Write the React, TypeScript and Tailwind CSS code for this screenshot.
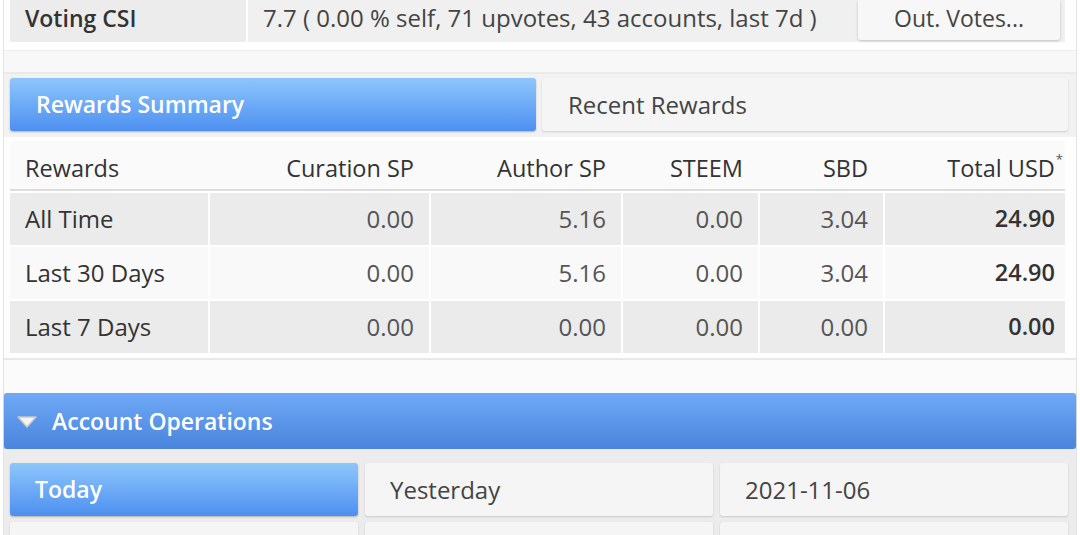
import React from "react";

const rows = [
  { label: "All Time", v: ["0.00", "5.16", "0.00", "3.04"], total: "24.90", dark: true },
  { label: "Last 30 Days", v: ["0.00", "5.16", "0.00", "3.04"], total: "24.90", dark: false },
  { label: "Last 7 Days", v: ["0.00", "0.00", "0.00", "0.00"], total: "0.00", dark: true },
];

const colW = ["w-[198px]", "w-[221px]", "w-[192px]", "w-[137px]", "w-[125px]", "flex-1"];

export default function App() {
  return (
    <div
      className="w-[1080px] h-[535px] overflow-hidden bg-white text-[#333]"
      style={{ fontFamily: '"Open Sans", "Noto Sans", sans-serif' }}
    >
      <div className="mx-[3px] border-x border-[#e4e4e4] bg-[#f7f7f7] h-full">
        {/* Voting CSI panel */}
        <div className="bg-white pl-[6px] pr-[11px] pb-[8px] border-b border-[#eeeeee]">
          <div className="flex h-[42px] items-stretch">
            <div className="w-[236px] bg-[#ececec] flex items-center pl-[15px] pb-[6px] text-[23px] font-semibold text-[#333]">
              Voting CSI
            </div>
            <div className="flex-1 ml-[2px] bg-[#f0f0f0] flex items-center justify-between pl-[15px] pr-[5px] text-[24px] text-[#444]">
              <span className="-mt-[6px]">7.7 ( 0.00 % self, 71 upvotes, 43 accounts, last 7d )</span>
              <div className="w-[202px] h-[40px] self-start bg-[#f7f7f7] rounded-b-[3px] shadow-[0_1px_3px_rgba(0,0,0,0.2)] flex items-center justify-center pb-[4px] text-[23px] text-[#444]">
                Out. Votes...
              </div>
            </div>
          </div>
        </div>
        <div className="h-[23px] bg-[#f8f8f8] border-b-2 border-[#eaeaea]" />

        {/* Rewards tabs */}
        <div className="bg-[#f2f2f2] pl-[6px] pr-[8px] pt-[4px] pb-[6px] flex gap-[6px]">
          <div className="flex-1 h-[53px] rounded-[3px] bg-gradient-to-b from-[#8ec6fb] to-[#4d8ff0] shadow-[0_1px_2px_rgba(0,0,0,0.25)] flex items-center pl-[26px] text-[23px] font-semibold text-white">
            Rewards Summary
          </div>
          <div className="flex-1 h-[53px] rounded-[3px] bg-[#f5f5f5] shadow-[0_1px_2px_rgba(0,0,0,0.15)] flex items-center pl-[26px] text-[24px] text-[#444]">
            Recent Rewards
          </div>
        </div>

        {/* Rewards table */}
        <div className="bg-white pl-[6px] pr-[11px] pt-[4px] pb-[5px] border-b-2 border-[#e8e8e8]">
          <div className="flex h-[50px] pt-[7px] bg-[#fafafa] border-b-2 border-[#dddddd] text-[23.5px] text-[#333]">
            {["Rewards", "Curation SP", "Author SP", "STEEM", "SBD", "Total USD"].map((h, i) => (
              <div
                key={h}
                className={`${colW[i]} flex items-center ${i === 0 ? "pl-[15px]" : i === 5 ? "justify-end pr-[2px]" : "justify-end pr-[15px]"}`}
              >
                {h}
                {i === 5 && <span className="relative -top-[9px] text-[13px] text-[#555] ml-[1px]">*</span>}
              </div>
            ))}
          </div>
          {rows.map((r) => (
            <div
              key={r.label}
              className={`flex h-[54px] ${r.dark ? "bg-[#ebebeb]" : "bg-[#f9f9f9]"} border-t-2 border-white`}
            >
              <div className={`${colW[0]} flex items-center pl-[15px] text-[24px] text-[#333]`}>
                {r.label}
              </div>
              {r.v.map((v, i) => (
                <div
                  key={i}
                  className={`${colW[i + 1]} border-l-2 border-white flex items-center justify-end pr-[15px] text-[24px] text-[#555]`}
                >
                  {v}
                </div>
              ))}
              <div className={`${colW[5]} border-l-2 border-white flex items-center justify-end pr-[10px] text-[23.5px] font-semibold text-[#333]`}>
                {r.total}
              </div>
            </div>
          ))}
        </div>

        <div className="h-[33px] bg-[#fbfbfb]" />

        {/* Account Operations */}
        <div className="h-[56px] rounded-[3px] bg-gradient-to-b from-[#6fa9f6] to-[#4a84dc] flex items-center pl-[12px] text-[23px] font-semibold text-white shadow-[0_1px_2px_rgba(0,0,0,0.25)]">
          <svg width="22" height="14" viewBox="0 0 22 14" className="mr-[14px] mt-[2px]">
            <path d="M2 2 L20 2 L11 12 Z" fill="#f4f4f4" stroke="#c8c8c8" strokeWidth="1.5" strokeLinejoin="round" />
          </svg>
          Account Operations
        </div>

        <div className="bg-[#ececec] pl-[6px] pr-[8px] pt-[14px] flex flex-col gap-[6px] h-[100px]">
          <div className="flex gap-[7px]">
            <div className="flex-1 h-[53px] rounded-[3px] bg-gradient-to-b from-[#8ec6fb] to-[#4d8ff0] shadow-[0_1px_2px_rgba(0,0,0,0.25)] flex items-center pl-[25px] text-[23px] font-semibold text-white">
              Today
            </div>
            <div className="flex-1 h-[53px] rounded-[3px] bg-[#f5f5f5] shadow-[0_1px_2px_rgba(0,0,0,0.15)] flex items-center pl-[25px] text-[24px] text-[#444]">
              Yesterday
            </div>
            <div className="flex-1 h-[53px] rounded-[3px] bg-[#f5f5f5] shadow-[0_1px_2px_rgba(0,0,0,0.15)] flex items-center pl-[25px] text-[24px] text-[#444]">
              2021-11-06
            </div>
          </div>
          <div className="flex gap-[7px]">
            <div className="flex-1 h-[53px] rounded-[3px] bg-[#f5f5f5] shadow-[0_1px_2px_rgba(0,0,0,0.15)]" />
            <div className="flex-1 h-[53px] rounded-[3px] bg-[#f5f5f5] shadow-[0_1px_2px_rgba(0,0,0,0.15)]" />
            <div className="flex-1 h-[53px] rounded-[3px] bg-[#f5f5f5] shadow-[0_1px_2px_rgba(0,0,0,0.15)]" />
          </div>
        </div>
      </div>
    </div>
  );
}
